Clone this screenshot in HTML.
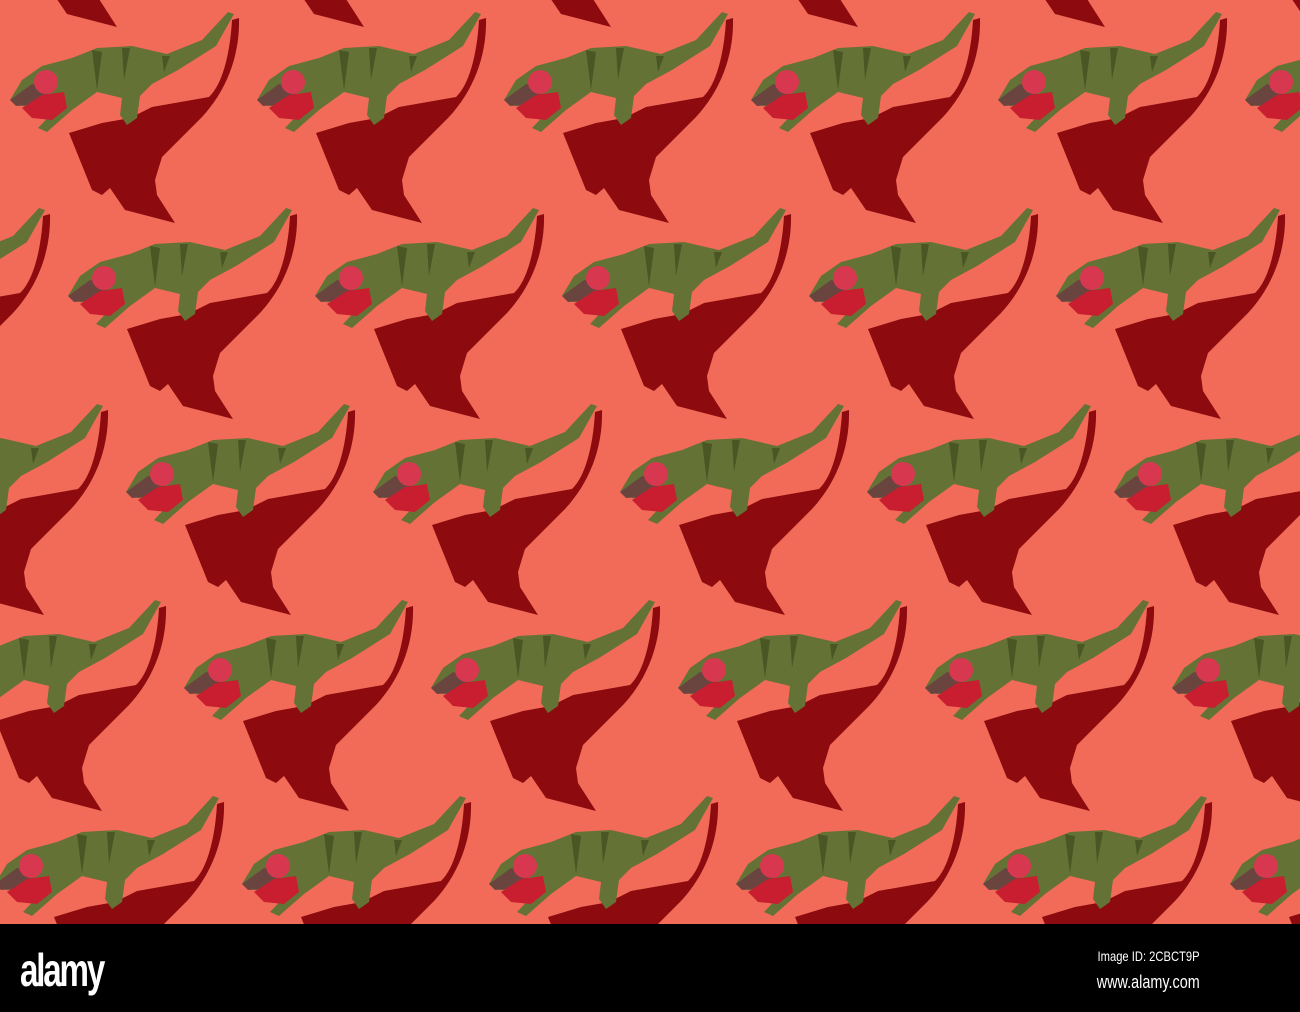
<!DOCTYPE html>
<html><head><style>
html,body{margin:0;padding:0;}
body{width:1300px;height:1012px;position:relative;overflow:hidden;background:#f26b59;font-family:"Liberation Sans",sans-serif;}
svg{position:absolute;left:0;top:0;}
.bar{position:absolute;left:0;top:924px;width:1300px;height:88px;background:#000;}
.logo{position:absolute;left:20px;top:19px;color:#fff;font-size:46px;font-weight:bold;letter-spacing:-3px;transform:scaleX(0.72);transform-origin:left;}
.id{position:absolute;right:100px;top:24px;color:#fff;font-size:14px;transform:scaleX(0.8);transform-origin:right;}
.www{position:absolute;right:100px;top:48px;color:#fff;font-size:18px;transform:scaleX(0.8);transform-origin:right;}
</style></head><body>
<svg width="1300" height="924" viewBox="0 0 1300 924">
<defs>
<g id="sh">
<path fill="#8d0b0f" d="M230,20 C228,55 220,85 207,97 L150,107 L128,118 L100,123 L67,133 L90,190 L100,195 L108,188 L123,210 L173,223 L155,195 L153,180 L160,157 L200,117 C225,90 238,55 237,18 Z"/>
</g>
<g id="dn">
<path fill="#647335" d="M8,100 L20,80 L40,66 L70,58 L95,48 L130,46 L165,54 L200,40 L226,12 L232,14 L214,46 L176,70 L150,84 L138,96 L135,118 L125,125 L118,115 L120,98 L95,92 L70,110 L45,132 L36,128 L55,108 L20,106 Z"/>
<path fill="#4a5624" d="M90,50 L95,90 L100,52 Z M120,48 L122,80 L128,48 Z M160,56 L162,72 L168,56 Z"/>
<path fill="#6a4540" d="M8,100 L30,84 L50,88 L40,104 L14,106 Z"/>
<circle cx="44" cy="82" r="12" fill="#d8384f"/>
<path fill="#c81e30" d="M20,108 L40,95 L62,92 L65,108 L50,120 L30,118 Z"/>
</g>
<g id="t"><use href="#sh"/><use href="#dn"/></g>
</defs>
<g transform="translate(-56,-196)"><use href="#t"/><use href="#t" x="247"/><use href="#t" x="494"/><use href="#t" x="741"/><use href="#t" x="988"/><use href="#t" x="1235"/></g>
<g transform="translate(-245,0)"><use href="#t"/><use href="#t" x="247"/><use href="#t" x="494"/><use href="#t" x="741"/><use href="#t" x="988"/><use href="#t" x="1235"/><use href="#t" x="1482"/></g>
<g transform="translate(-187,196)"><use href="#t"/><use href="#t" x="247"/><use href="#t" x="494"/><use href="#t" x="741"/><use href="#t" x="988"/><use href="#t" x="1235"/><use href="#t" x="1482"/></g>
<g transform="translate(-129,392)"><use href="#t"/><use href="#t" x="247"/><use href="#t" x="494"/><use href="#t" x="741"/><use href="#t" x="988"/><use href="#t" x="1235"/><use href="#t" x="1482"/></g>
<g transform="translate(-71,588)"><use href="#t"/><use href="#t" x="247"/><use href="#t" x="494"/><use href="#t" x="741"/><use href="#t" x="988"/><use href="#t" x="1235"/><use href="#t" x="1482"/></g>
<g transform="translate(-13,784)"><use href="#t"/><use href="#t" x="247"/><use href="#t" x="494"/><use href="#t" x="741"/><use href="#t" x="988"/><use href="#t" x="1235"/><use href="#t" x="1482"/></g>
</svg>
<div class="bar">
<div class="logo">alamy</div>
<div class="id">Image ID: 2CBCT9P</div>
<div class="www">www.alamy.com</div>
</div>
</body></html>
